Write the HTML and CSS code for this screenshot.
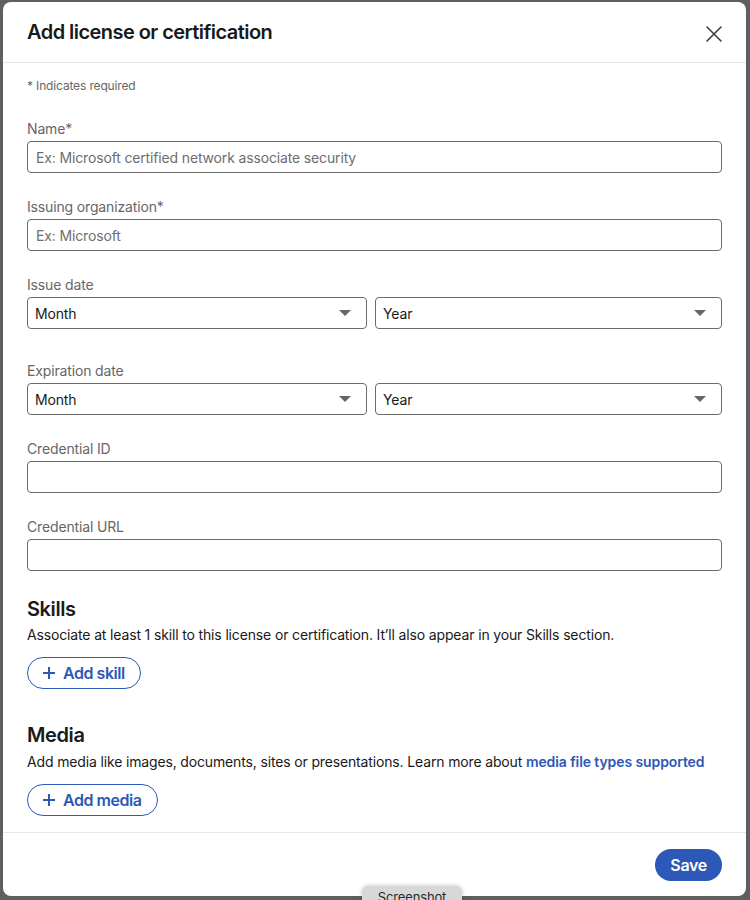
FILE: index.html
```html
<!DOCTYPE html>
<html lang="en">
<head>
    <meta charset="UTF-8">
    <meta name="viewport" content="width=device-width, initial-scale=1.0">
    <title>Add license or certification</title>
    <link rel="stylesheet" href="styles.css">
</head>
<body>
    <div class="backdrop">
        <div class="modal">
            <header class="modal-header">
                <h2>Add license or certification</h2>
                <button class="close" aria-label="Dismiss">
                    <svg width="16" height="16" viewBox="0 0 16 16">
                        <path d="M1 1L15 15M15 1L1 15" stroke="#404040" stroke-width="1.6" stroke-linecap="round"/>
                    </svg>
                </button>
            </header>

            <div class="modal-body">
                <p class="required-note">* Indicates required</p>

                <div class="field">
                    <label for="name">Name*</label>
                    <input type="text" id="name" placeholder="Ex: Microsoft certified network associate security">
                </div>

                <div class="field">
                    <label for="org">Issuing organization*</label>
                    <input type="text" id="org" placeholder="Ex: Microsoft">
                </div>

                <div class="field field-date">
                    <label>Issue date</label>
                    <div class="date-row">
                        <div class="select"><span>Month</span><svg width="12" height="6" viewBox="0 0 12 6"><path d="M0 0H12L6 6Z" fill="#666"/></svg></div>
                        <div class="select"><span>Year</span><svg width="12" height="6" viewBox="0 0 12 6"><path d="M0 0H12L6 6Z" fill="#666"/></svg></div>
                    </div>
                </div>

                <div class="field">
                    <label>Expiration date</label>
                    <div class="date-row">
                        <div class="select"><span>Month</span><svg width="12" height="6" viewBox="0 0 12 6"><path d="M0 0H12L6 6Z" fill="#666"/></svg></div>
                        <div class="select"><span>Year</span><svg width="12" height="6" viewBox="0 0 12 6"><path d="M0 0H12L6 6Z" fill="#666"/></svg></div>
                    </div>
                </div>

                <div class="field">
                    <label for="cred-id">Credential ID</label>
                    <input type="text" id="cred-id">
                </div>

                <div class="field">
                    <label for="cred-url">Credential URL</label>
                    <input type="text" id="cred-url">
                </div>

                <section class="extra extra-skills">
                    <h3>Skills</h3>
                    <p>Associate at least 1 skill to this license or certification. It’ll also appear in your Skills section.</p>
                    <button class="pill">
                        <svg width="12" height="12" viewBox="0 0 12 12"><path d="M6 0V12M0 6H12" stroke="currentColor" stroke-width="2"/></svg>
                        Add skill
                    </button>
                </section>

                <section class="extra extra-media">
                    <h3>Media</h3>
                    <p>Add media like images, documents, sites or presentations. Learn more about <a href="#">media file types supported</a></p>
                    <button class="pill">
                        <svg width="12" height="12" viewBox="0 0 12 12"><path d="M6 0V12M0 6H12" stroke="currentColor" stroke-width="2"/></svg>
                        Add media
                    </button>
                </section>
            </div>

            <footer class="modal-footer">
                <button class="save">Save</button>
            </footer>
        </div>

        <div class="tooltip">Screenshot</div>
    </div>
</body>
</html>
```

FILE: styles.css
```css
* {
    box-sizing: border-box;
}
body {
    margin: 0;
    font-family: 'Inter', 'Liberation Sans', sans-serif;
    letter-spacing: -0.15px;
    color: #191919;
    background-color: #5f5f5f;
}
.backdrop {
    position: relative;
    height: 900px;
    padding: 2px 4px 0 3px;
    overflow: hidden;
}
.modal {
    background-color: #ffffff;
    border-radius: 8px;
    height: 894px;
    display: flex;
    flex-direction: column;
}
.modal-header {
    display: flex;
    justify-content: space-between;
    align-items: center;
    padding: 16px 24px 16px 24px;
    border-bottom: 1px solid #e8e8e8;
}
.modal-header h2 {
    margin: 0;
    font-size: 20px;
    line-height: 28px;
    font-weight: 600;
    letter-spacing: -0.55px;
}
.close {
    background: none;
    border: none;
    padding: 0;
    width: 16px;
    height: 16px;
    margin-top: 4px;
    cursor: pointer;
}
.close svg {
    display: block;
}
.modal-body {
    flex: 1;
    padding: 15px 24px 16px 24px;
}
.required-note {
    margin: 0 0 25px 0;
    font-size: 12px;
    line-height: 16px;
    color: #666666;
}
.field {
    margin-bottom: 24px;
}
.field-date {
    margin-bottom: 32px;
}
.field label {
    display: block;
    font-size: 14px;
    line-height: 20px;
    color: #666666;
    margin-bottom: 2px;
}
.field input {
    display: block;
    width: 100%;
    height: 32px;
    padding: 0 8px;
    border: 1px solid #6b6b6b;
    border-radius: 4px;
    font-family: inherit;
    font-size: 14px;
    letter-spacing: -0.15px;
    color: #191919;
}
.field input::placeholder {
    color: #6e6e6e;
}
.date-row {
    display: grid;
    grid-template-columns: 340px 1fr;
    gap: 8px;
}
.select {
    display: flex;
    justify-content: space-between;
    align-items: center;
    height: 32px;
    padding: 0 15px 0 7px;
    border: 1px solid #6b6b6b;
    border-radius: 4px;
    font-size: 14px;
    color: #191919;
}
.extra h3 {
    margin: 0;
    font-size: 20px;
    line-height: 28px;
    font-weight: 600;
    letter-spacing: -0.4px;
}
.extra p {
    margin: 2px 0 0 0;
    font-size: 14px;
    line-height: 20px;
    color: #191919;
}
.extra a {
    color: #2d58b7;
    font-weight: 600;
    letter-spacing: -0.1px;
    text-decoration: none;
}
.extra-skills {
    margin-top: 23px;
}
.extra-media {
    margin-top: 32px;
}
.extra-media p {
    margin-top: 3px;
}
.pill {
    display: inline-flex;
    align-items: center;
    gap: 8px;
    height: 32px;
    margin-top: 12px;
    padding: 0 15px 0 15px;
    background: #ffffff;
    border: 1px solid #2d58b7;
    border-radius: 16px;
    color: #2d58b7;
    font-family: inherit;
    font-size: 16px;
    font-weight: 600;
    letter-spacing: -0.45px;
    cursor: pointer;
}
.extra-media .pill {
    margin-top: 12px;
}
.modal-footer {
    display: flex;
    justify-content: flex-end;
    padding: 16px 24px 15px 24px;
    border-top: 1px solid #e8e8e8;
}
.save {
    height: 32px;
    padding: 0 15px;
    background-color: #2d58b7;
    color: #ffffff;
    border: none;
    border-radius: 16px;
    font-family: inherit;
    font-size: 16px;
    font-weight: 600;
    letter-spacing: -0.3px;
    cursor: pointer;
}
.tooltip {
    position: absolute;
    left: 362px;
    top: 886px;
    width: 100px;
    height: 30px;
    padding-top: 3px;
    background-color: #d8d8d8;
    border-radius: 6px;
    box-shadow: 0 0 4px rgba(0, 0, 0, 0.25);
    text-align: center;
    font-size: 13px;
    color: #2a2a2a;
}
```
